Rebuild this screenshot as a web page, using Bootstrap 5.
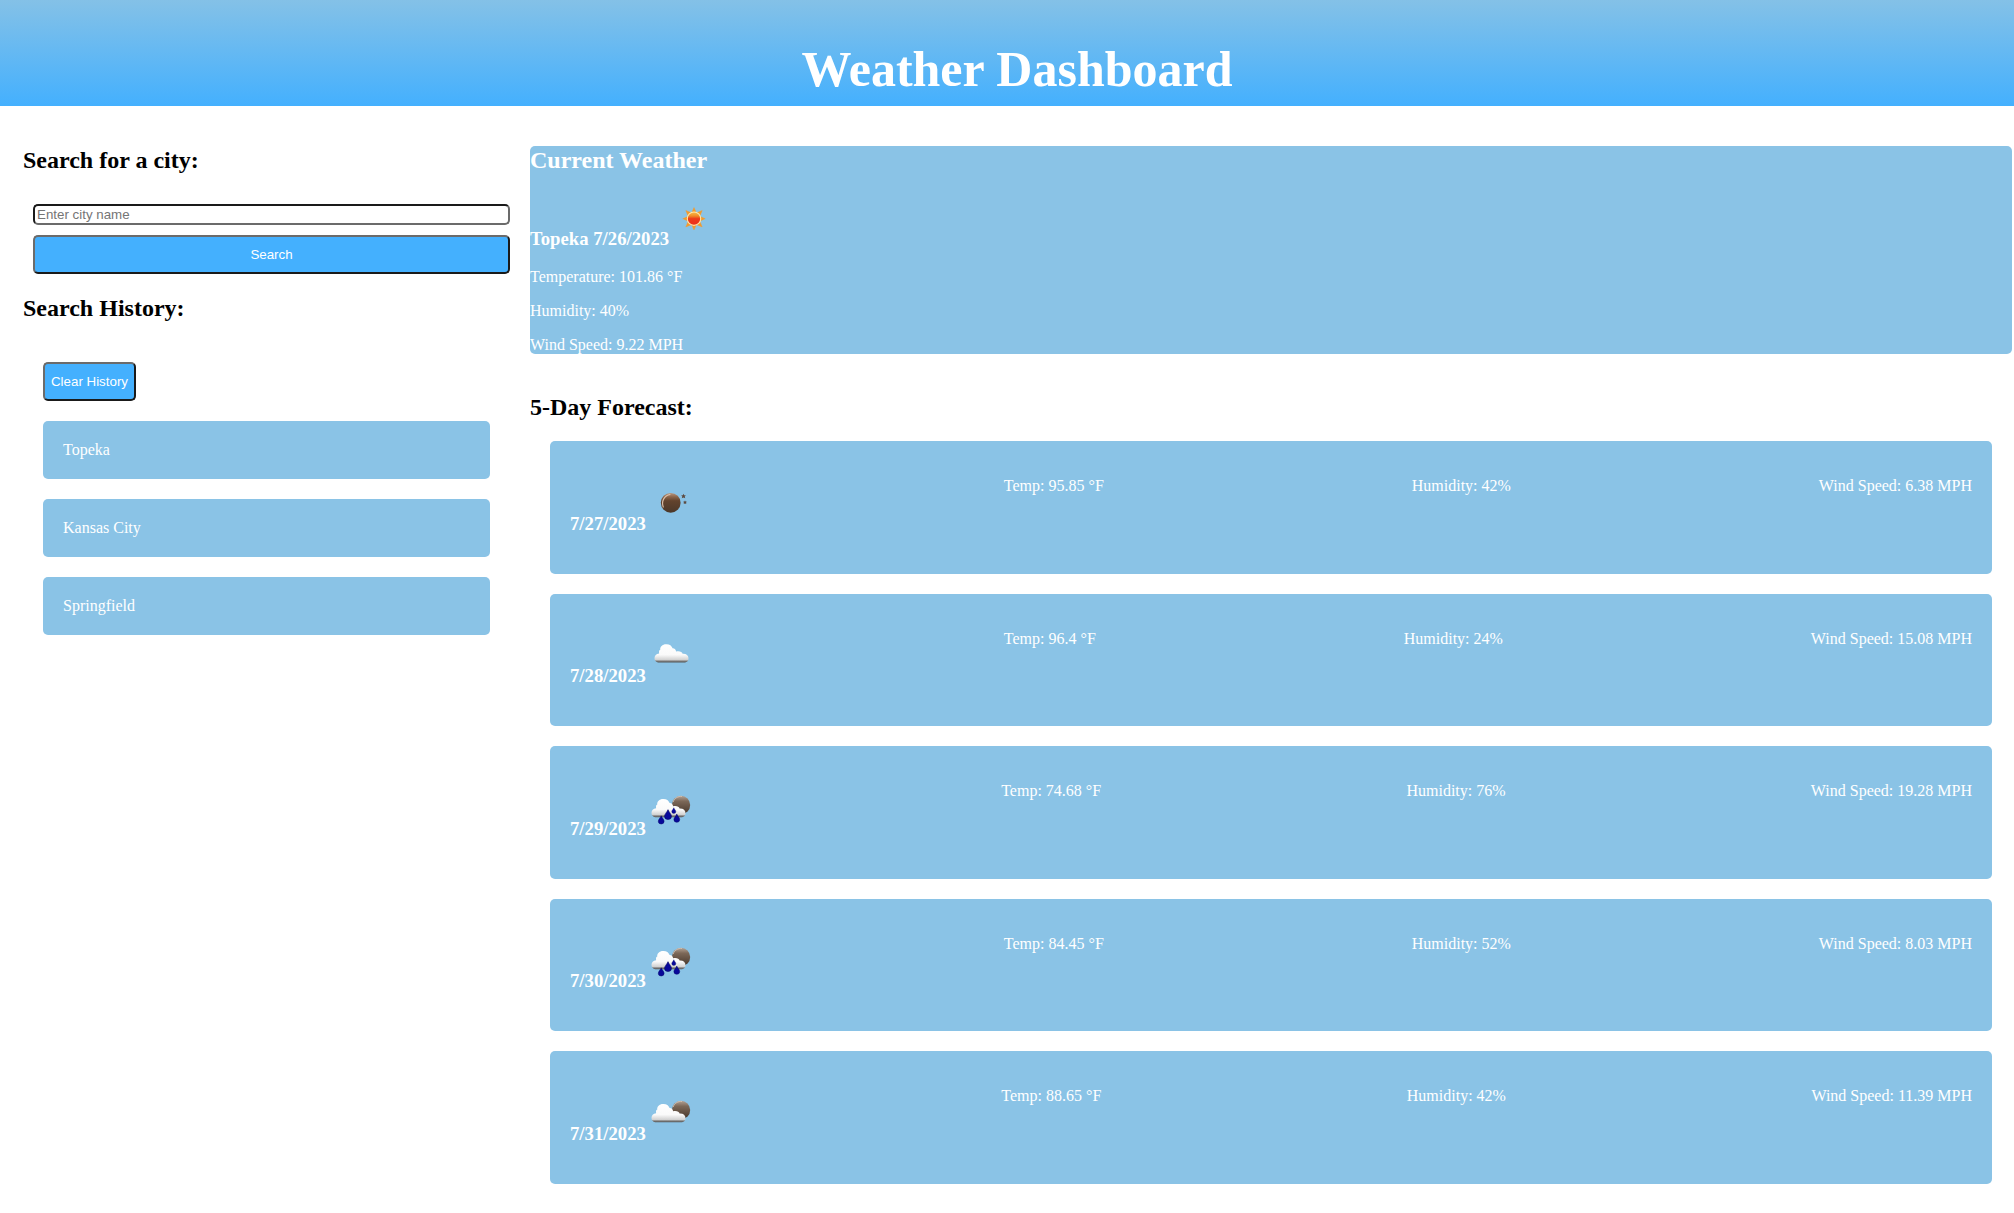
<!DOCTYPE html>
<html lang="en">
<head>
<meta charset="utf-8">
<meta name="viewport" content="width=device-width, initial-scale=1">
<title>Weather Dashboard</title>
<link href="https://cdn.jsdelivr.net/npm/bootstrap@5.3.0/dist/css/bootstrap.min.css" rel="stylesheet">
<style>
body{font-family:"Liberation Serif","Times New Roman",serif;font-size:16px;line-height:18px;color:#000;background:#fff;min-height:1213px}
h1,h2,h3{font-weight:700;color:inherit;margin:0}
.top-band{height:106px;padding:40px 0 0 20px;background:linear-gradient(#84c1e7,#44b0fe)}
h1{font-size:50px;line-height:58px;color:#fff}
h2{font-size:24px;line-height:28px}
h3{font-size:18.72px;line-height:21px;white-space:nowrap}
main{padding:40px 2px 0 23px}
.side{width:487px;margin-right:20px}
.city-form{padding:30px 0 0 10px;gap:10px}
.city-input,.blue-btn{font:13.333px/15px "Liberation Sans",Arial,sans-serif;border:2px solid;border-radius:5px}
.city-input{height:21px;padding:1px 2px;border-color:#1a1a1a #6b6b6b #6b6b6b #1a1a1a;outline:0}
.city-input::placeholder{color:#757575;opacity:1}
.blue-btn{height:39px;padding:0 6px;color:#fff;background:#44b0fe;border-color:#6b6b6b #1a1a1a #1a1a1a #6b6b6b}
.panel{background:#8ac3e6;border-radius:5px;color:#fff}
.history{padding:40px 20px 0;gap:20px}
.history .blue-btn{width:93px;padding:0}
.history-item{padding:20px}
.now{height:208px}
.now h3{margin:20.5px 0 19px}
.now p{margin:0 0 16px}
.forecast{padding-top:39px}
.days{padding:20px 20px 0;gap:20px}
.day{height:132.5px;padding:36px 20px 0}
.day h3{margin-top:2.5px}
h3 svg{width:50px;height:50px;vertical-align:baseline}
</style>
</head>
<body>
<svg width="0" height="0" class="position-absolute" aria-hidden="true">
  <defs>
    <linearGradient id="cloudFill" x1="0" y1="0" x2="0" y2="1"><stop offset="0" stop-color="#fff"/><stop offset=".58" stop-color="#fafafa"/><stop offset=".85" stop-color="#d2d2d2"/><stop offset=".93" stop-color="#777"/><stop offset="1" stop-color="#555"/></linearGradient>
    <linearGradient id="moonFill" x1="0" y1="0" x2="0" y2="1"><stop offset="0" stop-color="#b99880"/><stop offset=".2" stop-color="#8b654a"/><stop offset=".4" stop-color="#62432d"/><stop offset="1" stop-color="#4b382a"/></linearGradient>
    <linearGradient id="backFill" x1="0" y1="0" x2="0" y2="1"><stop offset="0" stop-color="#b5a496"/><stop offset=".3" stop-color="#7c6858"/><stop offset="1" stop-color="#45352a"/></linearGradient>
    <linearGradient id="sunFill" x1="0" y1="0" x2="0" y2="1"><stop offset="0" stop-color="#f8bd48"/><stop offset=".3" stop-color="#f08b27"/><stop offset=".5" stop-color="#ee3a1a"/><stop offset="1" stop-color="#ec2f1b"/></linearGradient>
    <path id="puff" d="M9.200 32.300C6.800 32 5.500 30.400 5.500 28.100c0-2.700 1.700-4.600 4.600-4.800C10 20.900 9.800 20.500 11.300 19.600c-.6-3.200 2.500-5.900 6.300-5.600 3 0 5.200 1.600 6 4.100 2.200.1 3.300 1.300 3.500 3.200 2.900-1 6.200.2 6.500 2.300 3.700-.2 5.900 1.700 5.900 4.400 0 2.500-1.300 3.900-3.500 4.300z"/>
    <path id="drop" d="M0-4.200C1.100-1.700 2.900-.4 2.900 1.300a2.900 2.700 0 0 1-5.800 0C-2.900-.4-1.100-1.700 0-4.200z" fill="#08089a" stroke="#050568" stroke-width=".5"/>
    <g id="cloud"><use href="#puff" fill="url(#cloudFill)"/></g>
    <g id="backmoon"><circle cx="35" cy="19.900" r="9.200" fill="url(#backFill)"/><path d="M27 17c1.700-4 5-5.800 9-5.600" fill="none" stroke="#d0c1b5" stroke-width="1"/></g>
    <symbol id="i-sun" viewBox="0 0 50 50">
      <path fill="#f39a2d" stroke="#f39a2d" stroke-width=".4" d="M25 12.500l2.200 5h-4.400zM25 35l2.200-5h-4.400zM13.800 23.700l5-2.200v4.400zM36.200 23.700l-5-2.200v4.400zM16.800 15.500l5.500 2.200-3.200 3.200zM33.200 15.500l-5.500 2.200 3.200 3.200zM16.800 31.900l5.500-2.200-3.200-3.200zM33.200 31.900l-5.500-2.200 3.200-3.200z"/>
      <circle cx="25" cy="23.700" r="6.700" fill="url(#sunFill)" stroke="#fce7ad" stroke-width="1.100"/>
    </symbol>
    <symbol id="i-moon" viewBox="0 0 50 50">
      <circle cx="24.700" cy="22.800" r="9.900" fill="url(#moonFill)"/>
      <path d="M17.400 27.500c-2.400-6 .6-12 7-13.200" fill="none" stroke="#d9bda7" stroke-width="1.200"/>
      <path fill="#5c4a40" d="M37.500 13.800l.7 1.500 1.700.1-1.200 1.100.5 1.800-1.700-.9-1.700.9.5-1.800-1.200-1.100 1.700-.1zM39 20.500l.6 1.100 1.300.1-.9 1 .3 1.400-1.300-.7-1.300.7.3-1.400-.9-1 1.300-.1z"/>
    </symbol>
    <symbol id="i-cloud" viewBox="0 0 50 50"><use href="#cloud" transform="translate(3 -1.800)"/></symbol>
    <symbol id="i-broken" viewBox="0 0 50 50"><use href="#backmoon"/><use href="#cloud"/></symbol>
    <symbol id="i-rain" viewBox="0 0 50 50"><use href="#backmoon"/><use href="#cloud"/>
      <use href="#drop" transform="translate(15.200 35)"/><use href="#drop" transform="translate(22 29.700) scale(1.200)"/><use href="#drop" transform="translate(30.800 33.300)"/><use href="#drop" transform="translate(27.800 25.700) scale(.7)"/>
    </symbol>
  </defs>
</svg>
<header class="top-band text-center"><h1>Weather Dashboard</h1></header>
<main class="d-flex">
  <aside class="side flex-shrink-0">
    <h2>Search for a city:</h2>
    <form class="city-form d-flex flex-column">
      <input class="city-input w-100" type="text" placeholder="Enter city name">
      <button class="blue-btn w-100" type="button">Search</button>
    </form>
    <h2 class="pt-3 mt-1">Search History:</h2>
    <div class="history d-flex flex-column">
      <button class="blue-btn" type="button">Clear History</button>
      <div class="panel history-item">Topeka</div>
      <div class="panel history-item">Kansas City</div>
      <div class="panel history-item">Springfield</div>
    </div>
  </aside>
  <div class="flex-grow-1">
    <section class="panel now">
      <h2>Current Weather</h2>
      <h3>Topeka 7/26/2023<svg><use href="#i-sun"/></svg></h3>
      <p>Temperature: 101.86 °F</p>
      <p>Humidity: 40%</p>
      <p>Wind Speed: 9.22 MPH</p>
    </section>
    <section class="forecast">
      <h2>5-Day Forecast:</h2>
      <div class="days d-flex flex-column">
        <div class="panel day d-flex justify-content-between"><h3>7/27/2023<svg><use href="#i-moon"/></svg></h3><span>Temp: 95.85 °F</span><span>Humidity: 42%</span><span>Wind Speed: 6.38 MPH</span></div>
        <div class="panel day d-flex justify-content-between"><h3>7/28/2023<svg><use href="#i-cloud"/></svg></h3><span>Temp: 96.4 °F</span><span>Humidity: 24%</span><span>Wind Speed: 15.08 MPH</span></div>
        <div class="panel day d-flex justify-content-between"><h3>7/29/2023<svg><use href="#i-rain"/></svg></h3><span>Temp: 74.68 °F</span><span>Humidity: 76%</span><span>Wind Speed: 19.28 MPH</span></div>
        <div class="panel day d-flex justify-content-between"><h3>7/30/2023<svg><use href="#i-rain"/></svg></h3><span>Temp: 84.45 °F</span><span>Humidity: 52%</span><span>Wind Speed: 8.03 MPH</span></div>
        <div class="panel day d-flex justify-content-between"><h3>7/31/2023<svg><use href="#i-broken"/></svg></h3><span>Temp: 88.65 °F</span><span>Humidity: 42%</span><span>Wind Speed: 11.39 MPH</span></div>
      </div>
    </section>
  </div>
</main>
<script src="https://cdn.jsdelivr.net/npm/bootstrap@5.3.0/dist/js/bootstrap.bundle.min.js"></script>
</body>
</html>
